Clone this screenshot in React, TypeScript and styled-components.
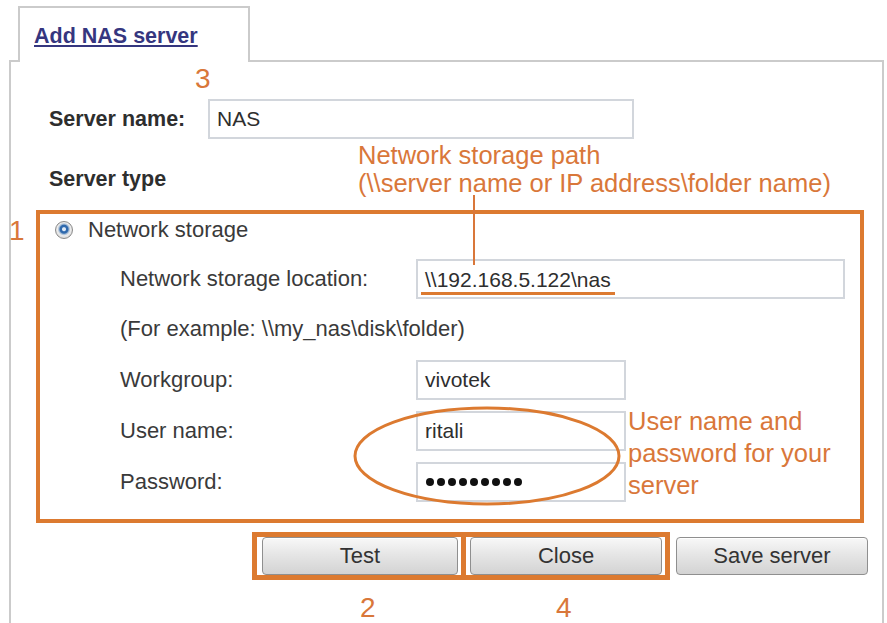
import React from 'react'
import styled, { createGlobalStyle } from 'styled-components'

const ORANGE = '#dc7a30'
const NOTE = '#d9773a'
const FRAME = '#cbcbcb'

const GlobalStyle = createGlobalStyle`
  html, body {
    margin: 0;
    padding: 0;
    background: #fff;
  }
  body {
    font-family: 'Liberation Sans', Arial, sans-serif;
  }
`

const App = (): JSX.Element => {
  return (
    <React.Fragment>
      <GlobalStyle />
      <Page>
        <TabStrip>
          <Tab>
            <TabLink>Add NAS server</TabLink>
          </Tab>
        </TabStrip>
        <Panel>
          <FieldRow $indent={38} $labelWidth={159}>
            <Label $bold>Server name:</Label>
            <Field $width={426}>NAS</Field>
          </FieldRow>
          <SectionTitle>Server type</SectionTitle>
          <StorageBox>
            <RadioRow>
              <Radio />
              <span>Network storage</span>
            </RadioRow>
            <FieldRow $indent={80} $labelWidth={296} $gap={16}>
              <Label>Network storage location:</Label>
              <Field $width={429}>
                <Marked>\\192.168.5.122\nas</Marked>
              </Field>
            </FieldRow>
            <Hint>(For example: \\my_nas\disk\folder)</Hint>
            <FieldRow $indent={80} $labelWidth={296} $gap={18}>
              <Label>Workgroup:</Label>
              <Field $width={210}>vivotek</Field>
            </FieldRow>
            <FieldRow $indent={80} $labelWidth={296} $gap={11}>
              <Label>User name:</Label>
              <Field $width={210}>ritali</Field>
            </FieldRow>
            <FieldRow $indent={80} $labelWidth={296} $gap={11}>
              <Label>Password:</Label>
              <Field $width={210}>
                <Dots>
                  {Array.from({ length: 9 }).map((_, i) => (
                    <Dot key={i} />
                  ))}
                </Dots>
              </Field>
            </FieldRow>
          </StorageBox>
          <ButtonRow>
            <Highlight $width={214} $padLeft={5}>
              <Button $width={196}>Test</Button>
            </Highlight>
            <Highlight $width={204} $padLeft={4} $joined>
              <Button $width={192}>Close</Button>
            </Highlight>
            <SaveButton $width={192}>Save server</SaveButton>
          </ButtonRow>
        </Panel>

        {/* callouts drawn over the form */}
        <Marker $x={195} $y={65}>3</Marker>
        <Marker $x={9} $y={217}>1</Marker>
        <Marker $x={360} $y={594}>2</Marker>
        <Marker $x={556} $y={594}>4</Marker>
        <Note $x={358} $y={141} $lh={28}>
          Network storage path
          <br />
          (\\server name or IP address\folder name)
        </Note>
        <Leader />
        <Note $x={628} $y={405} $lh={32}>
          User name and
          <br />
          password for your
          <br />
          server
        </Note>
        <Ring width="272" height="104" viewBox="0 0 272 104">
          <ellipse
            cx="136"
            cy="52"
            rx="132"
            ry="48"
            fill="none"
            stroke={ORANGE}
            strokeWidth="3"
          />
        </Ring>
      </Page>
    </React.Fragment>
  )
}

const Page = styled.div`
  position: relative;
  width: 887px;
  height: 623px;
  overflow: hidden;
  background: #fff;
  display: flex;
  flex-direction: column;
`

const TabStrip = styled.div`
  display: flex;
  padding: 6px 0 0 18px;
`

const Tab = styled.div`
  position: relative;
  z-index: 1;
  box-sizing: border-box;
  width: 232px;
  height: 56px;
  margin-bottom: -2px;
  padding: 15px 0 0 14px;
  background: #fff;
  border: 2px solid ${FRAME};
  border-bottom: 0;
`

const TabLink = styled.span`
  font-size: 21.5px;
  line-height: 26px;
  font-weight: bold;
  color: #35367f;
  text-decoration: underline;
  text-underline-offset: 2px;
`

const Panel = styled.div`
  flex: 1;
  box-sizing: border-box;
  width: 875px;
  margin-left: 9px;
  padding-top: 37px;
  border: 2px solid ${FRAME};
  border-bottom: 0;
`

const FieldRow = styled.div<{ $indent: number; $labelWidth: number; $gap?: number }>`
  display: grid;
  grid-template-columns: ${(p) => p.$labelWidth}px auto;
  align-items: center;
  padding-left: ${(p) => p.$indent}px;
  margin-top: ${(p) => p.$gap ?? 0}px;
`

const Label = styled.span<{ $bold?: boolean }>`
  font-size: ${(p) => (p.$bold ? '21.5px' : '22px')};
  font-weight: ${(p) => (p.$bold ? 'bold' : 'normal')};
  color: ${(p) => (p.$bold ? '#2e2e2e' : '#3a3a3a')};
  line-height: 26px;
`

const Field = styled.div<{ $width: number }>`
  box-sizing: border-box;
  width: ${(p) => p.$width}px;
  height: 40px;
  padding: 0 7px;
  display: flex;
  align-items: center;
  background: #fff;
  border: 2px solid #d2d6dc;
  font-size: 21px;
  color: #2e2e2e;
`

const Marked = styled.span`
  display: inline-block;
  padding: 0 4px 1px;
  margin-left: -4px;
  line-height: 22px;
  margin-top: 5px;
  border-bottom: 3px solid ${ORANGE};
`

const Dots = styled.span`
  display: flex;
  gap: 3px;
  padding-left: 1px;
`

const Dot = styled.span`
  width: 8px;
  height: 8px;
  border-radius: 50%;
  background: #111;
`

const SectionTitle = styled.div`
  margin: 27px 0 18px 38px;
  font-size: 21.5px;
  line-height: 26px;
  font-weight: bold;
  color: #2e2e2e;
`

const StorageBox = styled.div`
  box-sizing: border-box;
  width: 828px;
  height: 313px;
  margin-left: 25px;
  padding-top: 3px;
  border: 4px solid ${ORANGE};
`

const RadioRow = styled.div`
  display: flex;
  align-items: center;
  gap: 15px;
  height: 26px;
  padding-left: 15px;
  font-size: 22px;
  line-height: 26px;
  color: #3a3a3a;
`

const Radio = styled.span`
  box-sizing: border-box;
  width: 18px;
  height: 18px;
  border-radius: 50%;
  border: 1px solid #8a8a8a;
  background: radial-gradient(
    circle at 50% 45%,
    #dfeaf6 0 1.5px,
    #2f69ad 2.5px 4px,
    #9fb8d3 5px,
    #ececec 6.5px,
    #c4c4c4 100%
  );
`

const Hint = styled.div`
  margin-top: 17px;
  padding-left: 80px;
  font-size: 22px;
  line-height: 26px;
  color: #3a3a3a;
`

const ButtonRow = styled.div`
  display: flex;
  align-items: center;
  margin-top: 9px;
  padding-left: 241px;
`

const Highlight = styled.div<{ $width: number; $padLeft: number; $joined?: boolean }>`
  box-sizing: border-box;
  display: flex;
  align-items: center;
  width: ${(p) => p.$width}px;
  height: 48px;
  padding-left: ${(p) => p.$padLeft}px;
  border: 5px solid ${ORANGE};
  border-left-width: ${(p) => (p.$joined ? 0 : 5)}px;
`

const Button = styled.button<{ $width: number }>`
  box-sizing: border-box;
  width: ${(p) => p.$width}px;
  height: 38px;
  padding: 0;
  border: 1px solid #8f8f8f;
  border-radius: 4px;
  background: linear-gradient(#f8f8f8, #e6e6e6 45%, #d3d3d3);
  box-shadow: inset 0 1px 0 #fff;
  font-family: 'Liberation Sans', Arial, sans-serif;
  font-size: 22px;
  color: #333;
`

const SaveButton = styled(Button)`
  margin-left: 6px;
`

const Marker = styled.div<{ $x: number; $y: number }>`
  position: absolute;
  left: ${(p) => p.$x}px;
  top: ${(p) => p.$y}px;
  font-size: 28px;
  line-height: 1;
  color: ${NOTE};
`

const Note = styled.div<{ $x: number; $y: number; $lh: number }>`
  position: absolute;
  left: ${(p) => p.$x}px;
  top: ${(p) => p.$y}px;
  font-size: 25.5px;
  line-height: ${(p) => p.$lh}px;
  white-space: nowrap;
  color: ${NOTE};
`

const Leader = styled.div`
  position: absolute;
  left: 473px;
  top: 195px;
  width: 1.5px;
  height: 70px;
  background: ${NOTE};
`

const Ring = styled.svg`
  position: absolute;
  left: 351px;
  top: 404px;
`

export default App
